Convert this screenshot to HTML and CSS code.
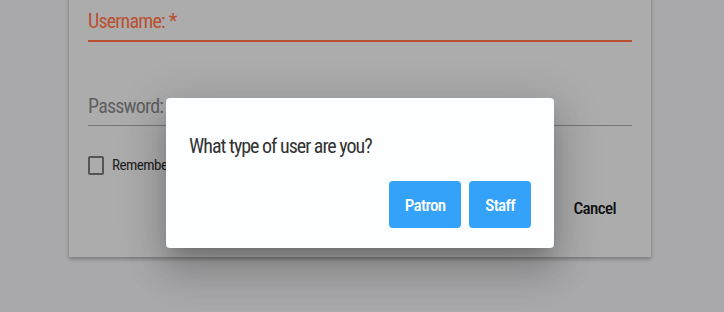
FILE: index.html
```html
<!DOCTYPE html>
<html lang="en">
<head>
    <meta charset="UTF-8">
    <meta name="viewport" content="width=device-width, initial-scale=1.0">
    <title>Login</title>
    <link rel="stylesheet" href="styles.css">
</head>
<body>
    <div class="login-card">
        <div class="field field-focused">
            <label class="field-label">Username: *</label>
        </div>

        <div class="field field-password">
            <label class="field-label">Password: *</label>
        </div>

        <div class="remember">
            <span class="checkbox"></span>
            <span class="remember-text">Remember me</span>
        </div>

        <div class="actions">
            <button class="text-button">Cancel</button>
        </div>
    </div>

    <!-- user type dialog -->
    <div class="dialog">
        <p class="dialog-text">What type of user are you?</p>
        <div class="dialog-buttons">
            <button class="blue-button">Patron</button>
            <button class="blue-button">Staff</button>
        </div>
    </div>
</body>
</html>
```

FILE: styles.css
```css
body {
    font-family: Roboto, sans-serif;
    font-stretch: 75%;
    margin: 0;
    padding: 0;
    height: 312px;
    overflow: hidden;
    position: relative;
    background-color: #a9a9ab;
}

.login-card {
    width: 544px;
    margin: -30px 0 0 69px;
    padding: 30px 19px 31px;
    background-color: #acacad;
    box-shadow: 0 2px 4px rgba(0, 0, 0, 0.3);
}

.field {
    padding: 9px 0 7px;
    border-bottom: 2px solid #b9502f;
}

.field-label {
    display: block;
    font-size: 20px;
    line-height: 24px;
    letter-spacing: -0.8px;
    color: #b9502f;
}

.field-password {
    margin-top: 43px;
    border-bottom: 1px solid #767677;
}

.field-password .field-label {
    color: #5f5f60;
}

.remember {
    display: flex;
    align-items: center;
    margin-top: 30px;
    height: 18px;
}

.checkbox {
    width: 12px;
    height: 15px;
    border: 2px solid #555556;
    border-radius: 2px;
}

.remember-text {
    margin-left: 8px;
    font-size: 15px;
    letter-spacing: -0.5px;
    color: #1d1d1d;
}

.actions {
    display: flex;
    justify-content: flex-end;
    margin-top: 16px;
}

.text-button {
    height: 36px;
    padding: 0 16px;
    border: none;
    background: none;
    font-family: inherit;
    font-stretch: inherit;
    font-size: 17px;
    font-weight: 500;
    letter-spacing: -0.6px;
    color: #111;
}

.dialog {
    position: absolute;
    left: 166px;
    top: 98px;
    width: 342px;
    padding: 36px 23px 20px;
    background-color: #fcfeff;
    border-radius: 4px;
    box-shadow: 0 11px 15px -7px rgba(0, 0, 0, 0.2),
                0 24px 38px 3px rgba(0, 0, 0, 0.14),
                0 9px 46px 8px rgba(0, 0, 0, 0.12);
}

.dialog-text {
    margin: 0;
    font-size: 20px;
    line-height: 24px;
    letter-spacing: -1px;
    color: #333;
}

.dialog-buttons {
    display: flex;
    justify-content: flex-end;
    gap: 8px;
    margin-top: 23px;
}

.blue-button {
    height: 47px;
    padding: 0 16px;
    border: none;
    border-radius: 4px;
    background-color: #33a2f8;
    font-family: inherit;
    font-stretch: inherit;
    font-size: 17px;
    font-weight: 500;
    letter-spacing: -0.7px;
    color: #fff;
}
```
